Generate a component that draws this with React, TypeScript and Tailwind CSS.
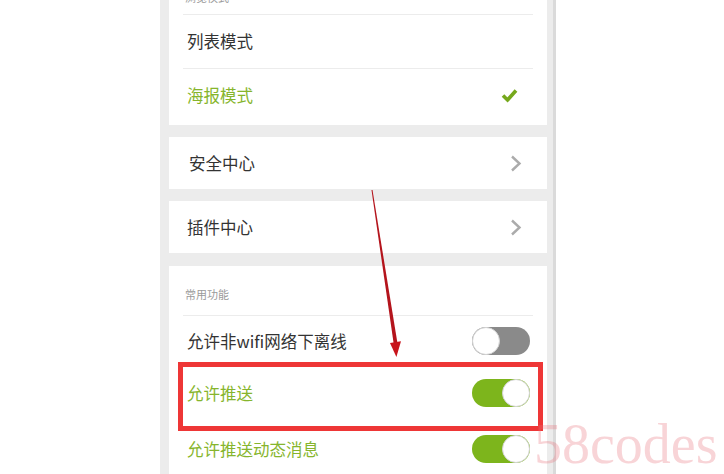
const GREEN = 'text-[#86b52c]';

const Toggle = ({ on }: { on: boolean }) => (
  <div
    className={`mr-[3px] flex h-[28px] w-[58px] items-center rounded-full ${
      on ? 'justify-end bg-[#7db51c]' : 'justify-start bg-[#8a8a8a]'
    }`}
  >
    <div className="h-[28px] w-[28px] rounded-full border border-[#d4d4d4] bg-white" />
  </div>
);

const Chevron = () => (
  <svg width="12" height="17" viewBox="0 0 12 17" className="mr-[11px]">
    <path d="M2 1.5 L9.5 8.5 L2 15.5" fill="none" stroke="#ababab" strokeWidth="2.4" />
  </svg>
);

const Check = () => (
  <svg width="17" height="15" viewBox="0 0 17 15" className="mr-[15px]">
    <path d="M2 7.5 L6.5 12 L15 2.5" fill="none" stroke="#76a81c" strokeWidth="3.6" />
  </svg>
);

export default function App() {
  return (
    <div className="relative h-[474px] w-[724px] overflow-hidden bg-white font-['Noto_Sans_CJK_SC','Noto_Sans',sans-serif]">
      {/* phone settings column */}
      <div className="ml-[160px] flex h-full w-[396px] flex-col gap-[12px] border-r-[3px] border-[#dadada] bg-[#ececec] pl-[9px] pr-[6px]">
        {/* view mode */}
        <div className="-mt-[30px] bg-white">
          <div className="mx-[14px] flex h-[45px] items-end border-b border-[#ececec] pb-[9px] pl-[2px] text-[11px] text-[#9a9a9a]">
            浏览模式
          </div>
          <div className="mx-[14px] flex h-[54px] items-center border-b border-[#ececec] pl-[4px] text-[16.5px] text-[#333]">
            列表模式
          </div>
          <div className="mx-[14px] flex h-[56px] items-center justify-between pb-[4px] pl-[4px]">
            <span className={`text-[16.5px] ${GREEN}`}>海报模式</span>
            <Check />
          </div>
        </div>

        <div className="bg-white">
          <div className="mx-[14px] flex h-[52px] items-center justify-between pl-[6px] text-[16.5px] text-[#333]">
            <span>安全中心</span>
            <Chevron />
          </div>
        </div>

        <div className="bg-white">
          <div className="mx-[14px] flex h-[52px] items-center justify-between pl-[4px] text-[16.5px] text-[#333]">
            <span>插件中心</span>
            <Chevron />
          </div>
        </div>

        {/* common features */}
        <div className="mt-[1px] flex-1 bg-white">
          <div className="mx-[14px] flex h-[50px] items-end border-b border-[#ececec] pb-[13px] pl-[2px] text-[11px] text-[#9a9a9a]">
            常用功能
          </div>
          <div className="mx-[14px] flex h-[50px] items-center justify-between pl-[4px]">
            <span className="text-[16.5px] text-[#333]">允许非wifi网络下离线</span>
            <Toggle on={false} />
          </div>
          <div className="mx-[14px] flex h-[54px] items-center justify-between pl-[4px]">
            <span className={`text-[16.5px] ${GREEN}`}>允许推送</span>
            <Toggle on />
          </div>
          <div className="mx-[14px] flex h-[58px] items-center justify-between pl-[4px]">
            <span className={`text-[16.5px] ${GREEN}`}>允许推送动态消息</span>
            <Toggle on />
          </div>
        </div>
      </div>

      {/* annotation: red box */}
      <div className="absolute left-[178px] top-[362px] h-[69px] w-[365px] border-[5px] border-[#ee3636]" />

      {/* annotation: arrow */}
      <svg className="absolute left-0 top-0" width="724" height="474" viewBox="0 0 724 474">
        <polygon points="371.5,190 372.5,190 397.6,344 393.8,344.6" fill="#b4141c" />
        <polygon points="390,343 401,341.3 396.4,357" fill="#c8141c" />
      </svg>

      {/* watermark */}
      <div className="absolute left-[534px] top-[416px] font-['Liberation_Serif',serif] text-[56px] leading-none text-[#e8727c]/30">
        58codes
      </div>
    </div>
  );
}
